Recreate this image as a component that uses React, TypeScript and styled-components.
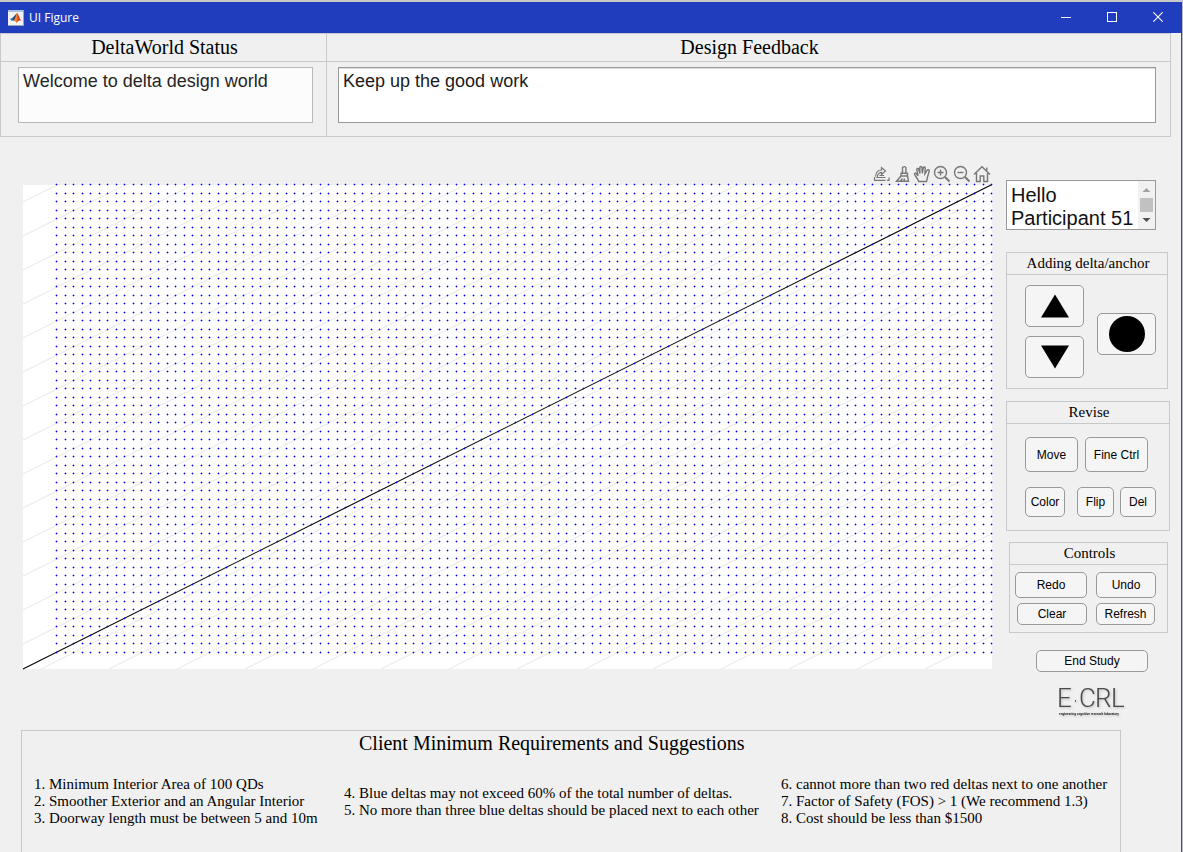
import React from "react";
import styled, { createGlobalStyle } from "styled-components";

const SANS = `"Liberation Sans", Arial, sans-serif`;
const SERIF = `"Liberation Serif", "Times New Roman", serif`;
const LINE = "#c8c8c8";
const EDGE = "#999999";

const Global = createGlobalStyle`
  * { box-sizing: border-box; }
  body { margin: 0; background: #f0f0f0; font-family: ${SANS}; color: #000; }
`;

const Window = styled.div`
  display: flex;
  flex-direction: column;
  height: 100vh;
  overflow: hidden;
  border-top: 2px solid #c9c9c9;
  border-right: 1px solid #b9b9c4;
`;

const TitleBar = styled.header`
  display: flex;
  align-items: center;
  flex: none;
  height: 31px;
  padding: 0 1px 0 8px;
  background: #203dbe;
  color: #fff;
  font: 12px/16px "Open Sans", sans-serif;
`;

const AppName = styled.h1`
  flex: 1;
  margin: 0 0 0 5px;
  font: inherit;
`;

const CaptionButton = styled.button`
  display: grid;
  place-items: center;
  width: 46px;
  height: 31px;
  padding: 0;
  border: 0;
  background: none;
  color: #fff;
`;

const Body = styled.main`
  display: flex;
  flex-direction: column;
  flex: 1;
  min-height: 0;
  border-right: 1px solid #3448c4;
`;

const Messages = styled.div`
  display: flex;
  flex: none;
  height: 104px;
  margin-right: 10px;
`;

const Panel = styled.section`
  display: flex;
  flex-direction: column;
  border: 1px solid ${LINE};
`;

const StatusPanel = styled(Panel)`
  width: 327px;
`;

const FeedbackPanel = styled(Panel)`
  flex: 1;
  border-left: 0;
`;

const PanelTitle = styled.h2<{ $large?: boolean }>`
  flex: none;
  height: ${(p) => (p.$large ? 28 : 22)}px;
  margin: 0;
  padding-left: 2px;
  border-bottom: 1px solid ${LINE};
  text-align: center;
  font: ${(p) => (p.$large ? "20px/27px" : "15px/21px")} ${SERIF};
`;

const MessageBox = styled.textarea<{ $muted?: boolean }>`
  flex: none;
  height: 56px;
  margin: ${(p) => (p.$muted ? "5px 13px 0 17px" : "5px 14px 0 11px")};
  padding: 2px 4px;
  border: 1px solid ${(p) => (p.$muted ? "#b8b8b8" : EDGE)};
  background: ${(p) => (p.$muted ? "#fcfcfc" : "#fff")};
  box-shadow: ${(p) => (p.$muted ? "none" : "inset 0 1px #dedede")};
  color: ${(p) => (p.$muted ? "#262626" : "#1a1a1a")};
  font: 18px/22px ${SANS};
  resize: none;
  outline: 0;
`;

const Workspace = styled.div`
  display: flex;
  align-items: flex-start;
  flex: none;
  gap: 14px;
  margin-top: 27px;
  padding: 0 11px 0 23px;
`;

const DesignArea = styled.div`
  flex: 1;
  min-width: 0;
`;

const Toolbar = styled.div`
  display: flex;
  justify-content: flex-end;
  height: 20px;
`;

const ToolButton = styled.button`
  display: grid;
  place-items: center;
  width: 20px;
  height: 20px;
  padding: 0;
  border: 0;
  background: none;
  color: #777;
`;

const Plot = styled.svg`
  display: block;
  width: 100%;
  overflow: visible;
`;

const Sidebar = styled.aside`
  display: flex;
  flex-direction: column;
  align-items: flex-start;
  width: 164px;
  padding-top: 16px;
`;

const Participant = styled.div`
  display: flex;
  justify-content: space-between;
  width: 150px;
  height: 50px;
  border: 1px solid ${EDGE};
  background: #fff;
  overflow: hidden;
`;

const ParticipantName = styled.p`
  margin: 0;
  padding: 3px 0 0 4px;
  font: 20px/23px ${SANS};
  color: #111;
`;

const ScrollTrack = styled.div`
  flex: none;
  width: 17px;
  background: #f1f1f1;
`;

const AddPanel = styled(Panel)`
  width: 162px;
  height: 137px;
  margin-top: 22px;
`;

const AddGrid = styled.div`
  display: flex;
  align-items: flex-start;
  gap: 13px;
  padding: 10px 0 0 18px;
`;

const Stack = styled.div`
  display: flex;
  flex-direction: column;
  gap: 9px;
`;

const AnchorSlot = styled.div`
  padding-top: 28px;
`;

const RevisePanel = styled(Panel)`
  width: 164px;
  height: 130px;
  margin-top: 12px;
`;

const ControlsPanel = styled(Panel)`
  width: 159px;
  height: 91px;
  margin: 11px 0 0 3px;
`;

const Row = styled.div<{ $pad: string; $gap: number }>`
  display: flex;
  gap: ${(p) => p.$gap}px;
  padding: ${(p) => p.$pad};
`;

const Button = styled.button<{ $w: number; $h: number }>`
  display: grid;
  place-items: center;
  width: ${(p) => p.$w}px;
  height: ${(p) => p.$h}px;
  padding: 0;
  border: 1px solid ${EDGE};
  border-radius: 5px;
  background: #f5f5f5;
  color: #000;
  font: 12px/14px ${SANS};
`;

const Ending = styled.div`
  display: flex;
  flex-direction: column;
  align-items: center;
  width: 142px;
  margin-top: 17px;
  padding-left: 30px;
`;

const Logo = styled.svg`
  margin-top: 12px;
  overflow: visible;
  filter: drop-shadow(1px 1px 1px #bbb);
`;

const Requirements = styled.section`
  display: flex;
  flex-direction: column;
  flex: 1;
  min-height: 122px;
  margin: 10px 60px 0 21px;
  border: 1px solid ${LINE};
  border-bottom: 0;
`;

const RequirementsTitle = styled.h2`
  margin: 0;
  padding: 0 0 0 337px;
  font: 20px/25px ${SERIF};
`;

const Columns = styled.div`
  display: grid;
  grid-template-columns: 310px 437px auto;
  align-items: center;
  padding: 20px 0 0 12px;
`;

const List = styled.ol`
  margin: 0;
  padding: 0;
  list-style: none;
  font: 15px/17px ${SERIF};
  white-space: nowrap;
`;

const PLOT_W = 969;
const PLOT_H = 485;
const guides = Array.from({ length: 28 }, (_, i) => 18 + i * 34);

/* Snap points lie 8.5 units apart; each is drawn on a whole pixel. */
const snap = (i: number, start: number) => start + Math.ceil(i * 8.5);
const points = Array.from({ length: 56 }, (_, r) =>
  Array.from({ length: 111 }, (_, c) => [snap(c, 33), snap(r, 0)]),
).flat();
const cores = points.map(([x, y]) => `M${x} ${y}h1v1h-1z`).join("");
const halos = points.map(([x, y]) => `M${x - 1} ${y}h3v1h-3zM${x} ${y - 1}h1v3h-1z`).join("");

function DesignPlot() {
  return (
    <Plot viewBox={`0 0 ${PLOT_W} ${PLOT_H}`} role="img" aria-label="Design grid">
      <defs>
        <clipPath id="plot"><rect width={PLOT_W} height={PLOT_H} /></clipPath>
      </defs>
      <rect y="1" width={PLOT_W} height={PLOT_H - 1} fill="#fff" />
      <g clipPath="url(#plot)" stroke="#e6e6e6">
        {guides.map((c) => (
          <line key={c} x1="0" y1={c} x2={PLOT_W} y2={c - PLOT_W / 2} />
        ))}
      </g>
      <path d={halos} fill="#a9a9ff" />
      <line x1="0" y1="485" x2="969" y2="0.5" stroke="#000" strokeWidth="1.1" />
      <path d={cores} fill="#0000ff" />
      <rect x="0" y="484" width="1" height="1" fill="#0000ff" />
    </Plot>
  );
}

const stroke = { fill: "none", stroke: "currentColor", strokeWidth: 1.4 } as const;

function Tools() {
  return (
    <Toolbar>
      <ToolButton aria-label="Export">
        <svg width="18" height="18" viewBox="0 0 18 18" {...stroke} strokeWidth="1.2">
          <path d="M1.5 12V15.3H12.500M16 12.500V15.300H14" />
          <path d="M2.500 11.500C3 7 5.500 5 8.500 5V2.500L12.500 6L8.500 9.500V7.300C6.500 7.500 4.500 9 4 12.500H12.500M6.500 10.500H11" />
        </svg>
      </ToolButton>
      <ToolButton aria-label="Brush">
        <svg width="18" height="18" viewBox="0 0 18 18" {...stroke}>
          <path d="M9.500 8V2.500Q11.200 0.800 12.900 2.500V8M8 8.200H14.500V11H8ZM8 11L3.500 16.300H15.500L14.500 11M7.500 16L9.500 13.500M11 16L11.500 13.500" />
        </svg>
      </ToolButton>
      <ToolButton aria-label="Pan">
        <svg width="18" height="18" viewBox="0 0 18 18" {...stroke}>
          <path d="M5.700 16.500C5 13.500 2 11.500 1.500 8.800C1.700 7.800 3 8 3.600 9L5 10.800L3.800 4.500C3.800 3.200 5.300 3 5.700 4.300L6.900 8.500L6.800 2.500C7 1.200 8.600 1.200 8.900 2.500L9.300 8.300L10.300 2.700C10.700 1.500 12.200 1.800 12.200 3L11.900 8.800L14.200 5.200C14.900 4.200 16.500 4.800 16.200 6L14.400 12.500L13.500 16.500Z" />
        </svg>
      </ToolButton>
      <ToolButton aria-label="Zoom in">
        <svg width="18" height="18" viewBox="0 0 18 18" {...stroke}>
          <circle cx="7.500" cy="7.500" r="6" /><path d="M4.500 7.500H10.500M7.500 4.500V10.500" /><path d="M12 12L16.500 16.500" strokeWidth="2" />
        </svg>
      </ToolButton>
      <ToolButton aria-label="Zoom out">
        <svg width="18" height="18" viewBox="0 0 18 18" {...stroke}>
          <circle cx="7.500" cy="7.500" r="6" /><path d="M4.500 7.500H10.500" /><path d="M12 12L16.500 16.500" strokeWidth="2" />
        </svg>
      </ToolButton>
      <ToolButton aria-label="Restore view">
        <svg width="18" height="18" viewBox="0 0 18 18" {...stroke}>
          <path d="M1 9.500L9 1.700L17 9.500M3.500 8V16.500H7.200V11H10.800V16.500H14.500V8M13.800 5.500V2.500" />
        </svg>
      </ToolButton>
    </Toolbar>
  );
}

export default function App() {
  return (
    <>
      <Global />
      <Window>
        <TitleBar>
          <svg width="16" height="16" viewBox="0 0 16 16" aria-hidden="true">
            <rect width="16" height="16" fill="#9aa6b8" />
            <rect x="0" y="0" width="15" height="15" fill="#f2f2f2" />
            <rect width="15" height="2" fill="#a9c3dc" />
            <path d="M2 9L5 7.500L8 5L6 10L4 11Z" fill="#2b6fa8" />
            <path d="M5 7.500L9 3L7.500 9L5.500 11Z" fill="#344a66" />
            <path d="M9 3C10.500 4 11.500 8 13.500 11C11.500 10 10 11 8.500 13C8 11 7 10.500 5.500 11C7.500 9 8 5 9 3Z" fill="#d6481c" />
            <path d="M9 3L9.500 9L8.500 13C8 11 7 10.500 5.500 11C7.500 9 8 5 9 3Z" fill="#f0863a" />
          </svg>
          <AppName>UI Figure</AppName>
          <CaptionButton aria-label="Minimize">
            <svg width="10" height="11"><rect y="5" width="10" height="1" fill="#fff" /></svg>
          </CaptionButton>
          <CaptionButton aria-label="Maximize">
            <svg width="10" height="11"><rect x="0.500" y="0.500" width="9" height="9" fill="none" stroke="#fff" /></svg>
          </CaptionButton>
          <CaptionButton aria-label="Close">
            <svg width="10" height="11"><path d="M0.300 0.300L9.700 9.700M9.700 0.300L0.300 9.700" stroke="#fff" strokeWidth="1.200" /></svg>
          </CaptionButton>
        </TitleBar>
        <Body>
          <Messages>
            <StatusPanel>
              <PanelTitle $large id="status">DeltaWorld Status</PanelTitle>
              <MessageBox $muted readOnly aria-labelledby="status" value="Welcome to delta design world" />
            </StatusPanel>
            <FeedbackPanel>
              <PanelTitle $large id="feedback">Design Feedback</PanelTitle>
              <MessageBox readOnly aria-labelledby="feedback" value="Keep up the good work" />
            </FeedbackPanel>
          </Messages>
          <Workspace>
            <DesignArea>
              <Tools />
              <DesignPlot />
            </DesignArea>
            <Sidebar>
              <Participant>
                <ParticipantName>Hello<br />Participant 51</ParticipantName>
                <ScrollTrack>
                  <svg width="17" height="48" aria-hidden="true">
                    <path d="M4.500 11L8.500 7L12.500 11Z" fill="#a3a3a3" />
                    <rect x="2" y="17" width="13" height="14" fill="#c1c1c1" />
                    <path d="M4.500 37L8.500 41L12.500 37Z" fill="#505050" />
                  </svg>
                </ScrollTrack>
              </Participant>
              <AddPanel>
                <PanelTitle>Adding delta/anchor</PanelTitle>
                <AddGrid>
                  <Stack>
                    <Button $w={59} $h={42} aria-label="Add upward delta">
                      <svg width="28" height="24"><path d="M0 23.500L14 0.500L28 23.500Z" /></svg>
                    </Button>
                    <Button $w={59} $h={42} aria-label="Add downward delta">
                      <svg width="28" height="24"><path d="M0 0.500L14 23.500L28 0.500Z" /></svg>
                    </Button>
                  </Stack>
                  <AnchorSlot>
                    <Button $w={59} $h={42} aria-label="Add anchor">
                      <svg width="36" height="36"><circle cx="18" cy="18" r="18" /></svg>
                    </Button>
                  </AnchorSlot>
                </AddGrid>
              </AddPanel>
              <RevisePanel>
                <PanelTitle>Revise</PanelTitle>
                <Row $pad="13px 0 0 18px" $gap={7}>
                  <Button $w={53} $h={35}>Move</Button>
                  <Button $w={63} $h={35}>Fine Ctrl</Button>
                </Row>
                <Row $pad="15px 0 0 18px" $gap={12}>
                  <Button $w={40} $h={30}>Color</Button>
                  <Row $pad="0" $gap={6}>
                    <Button $w={37} $h={30}>Flip</Button>
                    <Button $w={36} $h={30}>Del</Button>
                  </Row>
                </Row>
              </RevisePanel>
              <ControlsPanel>
                <PanelTitle>Controls</PanelTitle>
                <Row $pad="7px 0 0 5px" $gap={9}>
                  <Button $w={72} $h={26}>Redo</Button>
                  <Button $w={60} $h={26}>Undo</Button>
                </Row>
                <Row $pad="5px 0 0 7px" $gap={9}>
                  <Button $w={70} $h={22}>Clear</Button>
                  <Button $w={59} $h={22}>Refresh</Button>
                </Row>
              </ControlsPanel>
              <Ending>
                <Button $w={112} $h={22}>End Study</Button>
                <Logo width="68" height="36" viewBox="0 0 68 36" role="img" aria-label="E-CRL engineering cognitive research laboratory">
                  <g fontFamily="Roboto, sans-serif" fontWeight="300" fontSize="26" fill="#4a4a4a">
                    <text x="-1" y="23">E</text>
                    <text x="21" y="23">C</text>
                    <text x="37" y="23">R</text>
                    <text x="53" y="23">L</text>
                  </g>
                  <rect x="17" y="16" width="1" height="2" fill="#666" />
                  <text x="1" y="31" fontFamily={SANS} fontWeight="700" fontSize="3" fill="#111">engineering cognitive research laboratory</text>
                </Logo>
              </Ending>
            </Sidebar>
          </Workspace>
          <Requirements>
            <RequirementsTitle>Client Minimum Requirements and Suggestions</RequirementsTitle>
            <Columns>
              <List>
                <li>1. Minimum Interior Area of 100 QDs</li>
                <li>2. Smoother Exterior and an Angular Interior</li>
                <li>3. Doorway length must be between 5 and 10m</li>
              </List>
              <List>
                <li>4. Blue deltas may not exceed 60% of the total number of deltas.</li>
                <li>5. No more than three blue deltas should be placed next to each other</li>
              </List>
              <List>
                <li>6. cannot more than two red deltas next to one another</li>
                <li>7. Factor of Safety (FOS) &gt; 1 (We recommend 1.3)</li>
                <li>8. Cost should be less than $1500</li>
              </List>
            </Columns>
          </Requirements>
        </Body>
      </Window>
    </>
  );
}
